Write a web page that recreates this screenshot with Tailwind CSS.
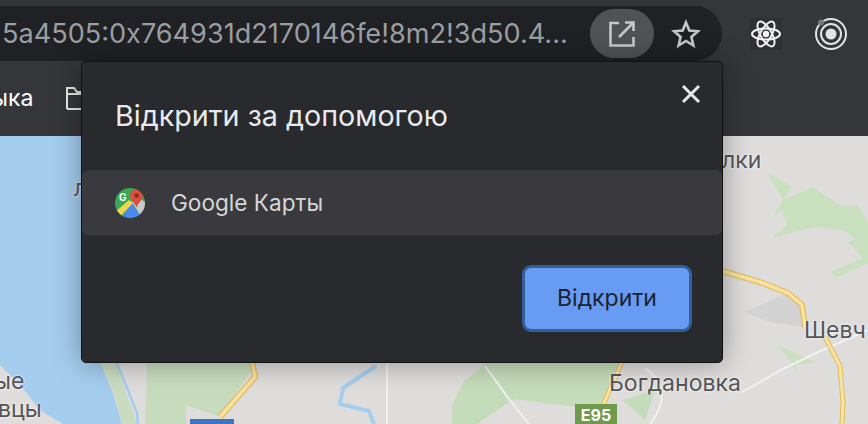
<!DOCTYPE html>
<html lang="uk">
<head>
    <meta charset="UTF-8">
    <meta name="viewport" content="width=device-width, initial-scale=1.0">
    <script src="https://cdn.jsdelivr.net/npm/@tailwindcss/browser@4"></script>
    <title>Відкрити за допомогою</title>
</head>
<body class="bg-[#35363a]">
  <div class="relative flex flex-col w-[868px] h-[424px] overflow-hidden font-['Inter',sans-serif]">

    <!-- toolbar -->
    <div class="flex items-start h-[62px] pt-[6px] bg-[#35363a]">
      <div class="flex items-center w-[722px] h-[55px] bg-[#202124] rounded-r-[28px] overflow-hidden">
        <span class="ml-[2px] w-[584px] text-[27.1px] leading-[55px] text-[#9b9ea3] whitespace-nowrap">5a4505:0x764931d2170146fe!8m2!3d50.4...</span>
        <div class="flex items-center justify-center w-[64px] h-[49px] ml-[4px] rounded-full bg-[#505256]">
          <svg width="30" height="30" viewBox="0 0 30 30" fill="none" stroke="#c6c7c9" stroke-width="2.6">
            <path d="M12 4H3.500v22.500h23V18"/>
            <path d="M18 3.500h8.500V12M26 4 12 18"/>
          </svg>
        </div>
        <svg class="ml-[17px]" width="30" height="30" viewBox="0 0 30 30" fill="none" stroke="#c6c7c9" stroke-width="2.600">
          <path d="M15 3.500 18.300 11.500 27 12.200 20.400 17.900 22.400 26.500 15 22 7.600 26.500 9.600 17.900 3 12.200 11.700 11.500Z"/>
        </svg>
      </div>
      <!-- extensions -->
      <div class="flex items-center h-[55px] ml-[28px] gap-[32px]">
        <div class="flex items-center justify-center w-[32px] h-[32px] bg-[#2f3033]">
          <svg width="32" height="32" viewBox="0 0 32 32" fill="none" stroke="#f1f1f1" stroke-width="2">
            <circle cx="16" cy="16" r="3.200" fill="#f1f1f1" stroke="none"/>
            <ellipse cx="16" cy="16" rx="14" ry="5.600"/>
            <ellipse cx="16" cy="16" rx="14" ry="5.600" transform="rotate(60 16 16)"/>
            <ellipse cx="16" cy="16" rx="14" ry="5.600" transform="rotate(120 16 16)"/>
          </svg>
        </div>
        <svg width="34" height="34" viewBox="0 0 34 34" fill="none">
          <circle cx="17" cy="17" r="15" stroke="#e4e4e4" stroke-width="2"/>
          <circle cx="17" cy="17" r="10" stroke="#e4e4e4" stroke-width="2"/>
          <circle cx="17" cy="17" r="5.500" fill="#e4e4e4"/>
          <circle cx="7" cy="5.500" r="3" fill="#77797c"/>
        </svg>
      </div>
    </div>

    <!-- bookmarks bar -->
    <div class="flex items-center h-[74px] bg-[#35363a] pb-[2px]">
      <span class="ml-[-9px] w-[75px] text-[23px] text-white whitespace-nowrap">ыка</span>
      <svg width="22" height="26" viewBox="0 0 22 26" fill="none" stroke="#e8e8e8" stroke-width="2">
        <path d="M1 24V3h7l3 4h11M1 24h21M1 9h21"/>
      </svg>
    </div>

    <!-- map -->
    <div class="relative flex-1 bg-[#dedddb]">
      <svg class="absolute inset-0 blur-[0.4px]" width="868" height="288" viewBox="0 136 868 288" fill="none">
        <path d="M0 136H100V362L113 393 122 424H63L40 410 20 385 0 365Z" fill="#a5cdee"/>
        <path d="M768 173 792 187 783 200 813 187 840 205 858 205 868 222V235L857 240 843 230 813 227 772 238 787 225 782 210 772 218 783 200Z" fill="#c8e0bd"/>
        <path d="M848 242 868 235V263L837 277 830 272 863 258Z" fill="#c8e0bd"/>
        <path d="M777 345 815 362 790 366 800 372Z" fill="#c8e0bd"/>
        <path d="M790 292 802 305 805 327 770 322 745 312Z" fill="#d3d3d3"/>
        <path d="M147 362H257L220 417 186 405 186 424H145Z" fill="#c7dcbd"/>
        <path d="M488 362H619L600 410 568 406 514 399 477 424H452L452 406 463 382Z" fill="#c4dcb9"/>
        <path d="M622 400 645 420 655 390 640 395Z" fill="#c4dcb9"/>
        <path d="M100 362 114 393 122 424H138L125 390 116 362Z" fill="#c9dcc0"/>
        <path d="M117 363 137 413 138 424" stroke="#a5cdee" stroke-width="2.500"/>
        <path d="M376 366 343 388 340 404 369 411 374 424" stroke="#a5cdee" stroke-width="4"/>
        <path d="M387 362V424" stroke="#f2f1ef" stroke-width="2"/>
        <path d="M485 366 506 395 535 432" stroke="#f2f1ef" stroke-width="2"/>
        <path d="M645 368C668 385 665 405 650 424" stroke="#f2f1ef" stroke-width="2"/>
        <path d="M742 392 785 368 814 354 868 330" stroke="#f2f1ef" stroke-width="2"/>
        <path d="M722 271 760 282 788 293 802 305 805 327" stroke="#e2bc63" stroke-width="6"/>
        <path d="M722 271 760 282 788 293 802 305 805 327" stroke="#f7e39f" stroke-width="3.500"/>
        <path d="M252 362 255 377 220 417" stroke="#e2bc63" stroke-width="6"/>
        <path d="M252 362 255 377 220 417" stroke="#f7e39f" stroke-width="3.500"/>
        <path d="M622 362 600 412" stroke="#e2bc63" stroke-width="5"/>
        <path d="M622 362 600 412" stroke="#f7e39f" stroke-width="3"/>
        <path d="M825 337 840 366 843 402 842 424" stroke="#e2bc63" stroke-width="5"/>
        <path d="M825 337 840 366 843 402 842 424" stroke="#f7e39f" stroke-width="3"/>
      </svg>
      <!-- map labels -->
      <span class="absolute left-[722px] top-[12px] text-[23px] leading-[24px] text-[#55565a] [text-shadow:0_0_3px_white]">лки</span>
      <span class="absolute left-[74px] top-[40px] text-[23px] leading-[24px] text-[#55565a] [text-shadow:0_0_3px_white]">л</span>
      <span class="absolute left-[804px] top-[182px] text-[23px] leading-[24px] text-[#55565a] whitespace-nowrap [text-shadow:0_0_3px_white]">Шевч</span>
      <span class="absolute left-[609px] top-[235px] text-[23px] leading-[24px] text-[#55565a] [text-shadow:0_0_3px_white]">Богдановка</span>
      <span class="absolute left-[-6px] top-[233px] text-[23px] leading-[24px] text-[#55565a] [text-shadow:0_0_3px_white]">ые</span>
      <span class="absolute left-[-2px] top-[261px] text-[23px] leading-[24px] text-[#55565a] [text-shadow:0_0_3px_white]">вцы</span>
      <span class="absolute left-[190px] top-[283px] w-[44px] h-[5px] bg-[#3f74c4]"></span>
      <span class="absolute left-[575px] top-[268px] w-[42px] h-[20px] bg-[#6f9a4c] text-white text-[16px] leading-[22px] font-bold text-center">E95</span>
    </div>

    <!-- open with popup -->
    <div class="absolute left-[81px] top-[61px] w-[642px] h-[302px] bg-[#292a2d] border border-[#111214] rounded-[5px] shadow-[0_0_28px_rgba(0,0,0,0.35)]">
      <div class="flex items-start justify-between h-[108px] pl-[33px] pr-[21px]">
        <h2 class="mt-[36px] text-[28.7px] leading-[36px] text-[#e8eaed] whitespace-nowrap">Відкрити за допомогою</h2>
        <svg class="mt-[22px]" width="20" height="20" viewBox="0 0 20 20" fill="none" stroke="#e8e8e8" stroke-width="3">
          <path d="M2 2 18 18M18 2 2 18"/>
        </svg>
      </div>
      <div class="flex items-center h-[65px] rounded-[6px] bg-[#3a3a3e] pl-[33px]">
        <!-- Google Maps badge, clipped to its circle -->
        <svg class="rounded-full" width="30" height="30" viewBox="0 0 30 30">
          <rect width="30" height="30" fill="#3aa757"/>
          <path d="M6 30 17 15 27 30Z" fill="#4a8af0"/>
          <path d="M0 24 14 12 18 15 4 30Z" fill="#f4d34d"/>
          <path d="M17 14 22 9 30 14V30H27Z" fill="#c9c9c9"/>
          <path d="M21.500 1C18 1 15 4 15 7.500 15 12 19.500 14 21.500 19.500 23.500 14 28 12 28 7.500 28 4 25 1 21.500 1Z" fill="#d9503f"/>
          <circle cx="21.500" cy="7.500" r="2.300" fill="#8f2a20"/>
          <text x="4" y="13" font-size="10" font-weight="700" fill="#fff" font-family="Inter, sans-serif">G</text>
        </svg>
        <span class="ml-[26px] text-[22.6px] text-[#d5d6d8]">Google Карты</span>
      </div>
      <div class="flex justify-end pt-[30px] pr-[30px]">
        <button class="w-[170px] h-[67px] rounded-[9px] bg-[#689bf2] border-[3px] border-[#33609b] text-[23px] text-[#1c2333]">Відкрити</button>
      </div>
    </div>
  </div>
</body>
</html>
